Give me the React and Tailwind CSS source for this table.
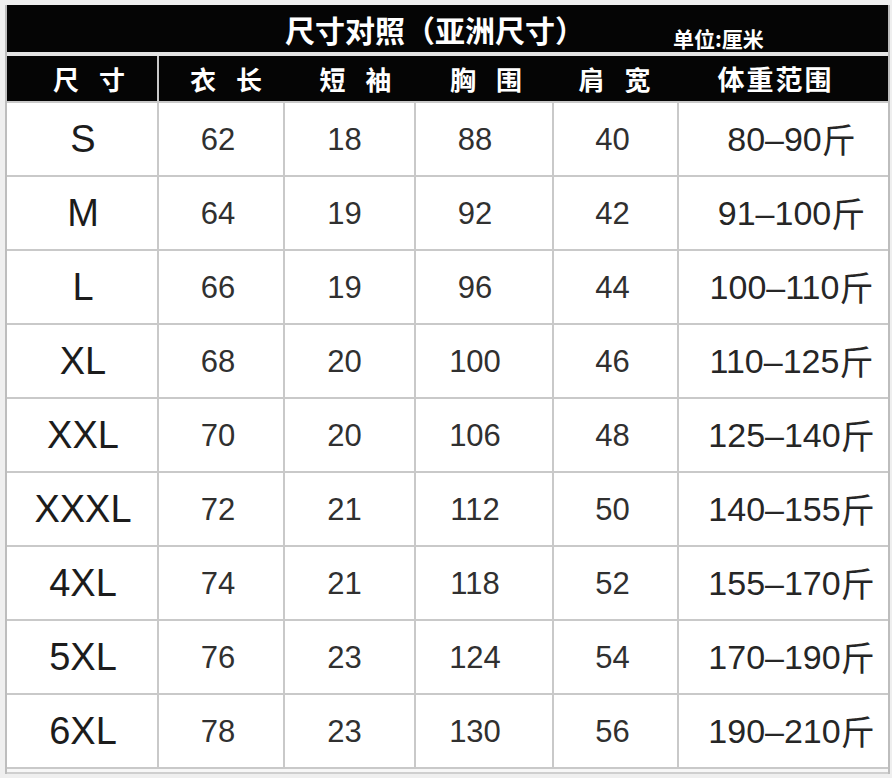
import React from "react";

const rows = [
  ["S", "62", "18", "88", "40", "80–90"],
  ["M", "64", "19", "92", "42", "91–100"],
  ["L", "66", "19", "96", "44", "100–110"],
  ["XL", "68", "20", "100", "46", "110–125"],
  ["XXL", "70", "20", "106", "48", "125–140"],
  ["XXXL", "72", "21", "112", "50", "140–155"],
  ["4XL", "74", "21", "118", "52", "155–170"],
  ["5XL", "76", "23", "124", "54", "170–190"],
  ["6XL", "78", "23", "130", "56", "190–210"],
];

const cjk = { fontFamily: '"Noto Sans CJK SC", "Noto Sans", sans-serif' };
const latin = { fontFamily: '"Liberation Sans", Arial, "Noto Sans CJK SC", sans-serif' };

export default function App() {
  return (
    <div className="w-[892px] h-[778px] overflow-hidden bg-[#efefef] pt-[5px] pl-[5px] pr-[2px]">
      <div className="border-l-2 border-r-2 border-[#bdbdbd]">
        {/* Title bar */}
        <div
          className="h-[47px] bg-[#050505] flex items-center pl-[278px] text-white"
          style={cjk}
        >
          <span className="text-[30px] font-bold leading-none">
            尺寸对照（亚洲尺寸）
          </span>
          <span className="self-end mb-[3px] ml-[88px] text-[21px] font-bold leading-none">
            单位:厘米
          </span>
        </div>
        <div className="h-[4px] bg-[#e4e4e4]" />
        {/* Header row */}
        <div
          className="h-[45px] bg-[#050505] grid grid-cols-[152px_126px_131px_138px_125px_1fr] text-white"
          style={cjk}
        >
          <div className="flex items-center justify-center border-r-2 border-[#c8c8c8] pl-[34px] text-[26px] font-bold tracking-[20px] leading-none">
            尺寸
          </div>
          <div className="flex items-center justify-center pl-[28px] text-[26px] font-bold tracking-[20px] leading-none">
            衣长
          </div>
          <div className="flex items-center justify-center pl-[30px] text-[26px] font-bold tracking-[20px] leading-none">
            短袖
          </div>
          <div className="flex items-center justify-center pl-[22px] text-[26px] font-bold tracking-[20px] leading-none">
            胸围
          </div>
          <div className="flex items-center justify-center pl-[16px] text-[26px] font-bold tracking-[20px] leading-none">
            肩宽
          </div>
          <div className="flex items-center justify-center pr-[16px] text-[27px] font-bold tracking-[2px] leading-none">
            体重范围
          </div>
        </div>
        {/* Data grid */}
        <div className="bg-[#c9c9c9] pt-[2px] pb-[2px] grid grid-cols-[150px_124px_129px_136px_123px_1fr] gap-[2px]">
          {rows.map((r) => (
            <React.Fragment key={r[0]}>
              <div
                className="h-[72px] bg-white flex items-center justify-center pl-[2px] text-[38px] text-[#1c1c1c] leading-none"
                style={latin}
              >
                {r[0]}
              </div>
              <div
                className="h-[72px] bg-white flex items-center justify-center pr-[6px] text-[31px] text-[#303030] leading-none"
                style={latin}
              >
                {r[1]}
              </div>
              <div
                className="h-[72px] bg-white flex items-center justify-center pr-[10px] text-[31px] text-[#303030] leading-none"
                style={latin}
              >
                {r[2]}
              </div>
              <div
                className="h-[72px] bg-white flex items-center justify-center pr-[18px] text-[31px] text-[#303030] leading-none"
                style={latin}
              >
                {r[3]}
              </div>
              <div
                className="h-[72px] bg-white flex items-center justify-center pr-[6px] text-[31px] text-[#303030] leading-none"
                style={latin}
              >
                {r[4]}
              </div>
              <div
                className="h-[72px] bg-white flex items-center justify-center pl-[16px] text-[34px] text-[#262626] leading-none"
                style={latin}
              >
                <span>{r[5]}</span>
                <span style={cjk} className="text-[34px]">斤</span>
              </div>
            </React.Fragment>
          ))}
        </div>
        <div className="h-[3px] bg-[#f7f7f7]" />
        <div className="h-[2px] bg-[#cfcfcf]" />
      </div>
    </div>
  );
}
